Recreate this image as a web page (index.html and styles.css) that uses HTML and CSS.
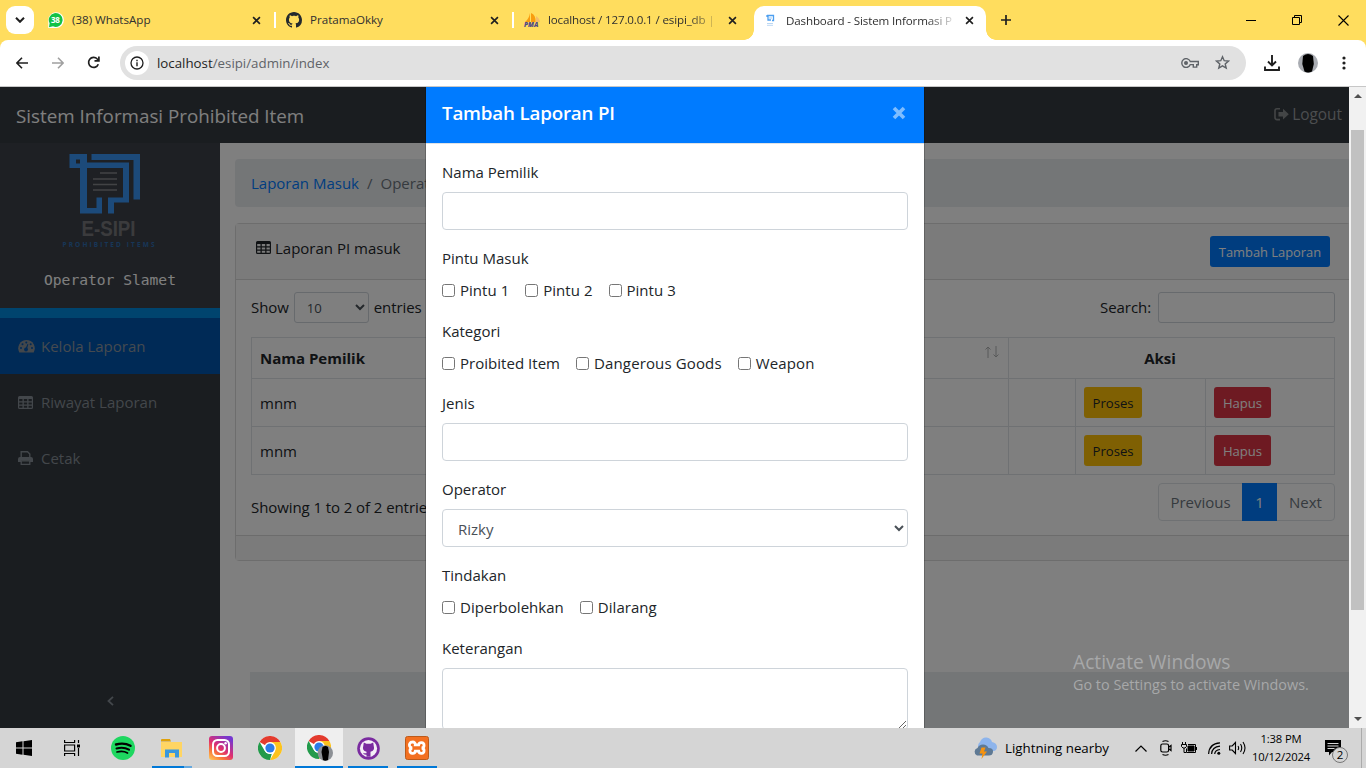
FILE: index.html
```html
<!DOCTYPE html>
<html lang="id">
<head>
<meta charset="utf-8">
<title>Dashboard - Sistem Informasi Prohibited Item</title>
<link rel="stylesheet" href="styles.css">
</head>
<body>
<svg class="defs" aria-hidden="true">
  <symbol id="i-close" viewBox="0 0 10 10"><path d="M1.2 1.2l7.6 7.6M8.8 1.2L1.2 8.8" stroke="#1f1f1f" stroke-width="1.8" fill="none"/></symbol>
  <symbol id="i-octocat" viewBox="0 0 16 16"><path d="M8 0C3.58 0 0 3.58 0 8c0 3.54 2.29 6.53 5.47 7.59.4.07.55-.17.55-.38 0-.19-.01-.82-.01-1.49-2.01.37-2.53-.49-2.69-.94-.09-.23-.48-.94-.82-1.13-.28-.15-.68-.52-.01-.53.63-.01 1.08.58 1.23.82.72 1.21 1.87.87 2.33.66.07-.52.28-.87.51-1.07-1.78-.2-3.64-.89-3.64-3.95 0-.87.31-1.59.82-2.15-.08-.2-.36-1.02.08-2.12 0 0 .67-.21 2.2.82.64-.18 1.32-.27 2-.27s1.36.09 2 .27c1.53-1.04 2.2-.82 2.2-.82.44 1.1.16 1.92.08 2.12.51.56.82 1.27.82 2.15 0 3.07-1.87 3.75-3.65 3.95.29.25.54.73.54 1.48 0 1.07-.01 1.93-.01 2.2 0 .21.15.46.55.38A8.01 8.01 0 0 0 16 8c0-4.42-3.58-8-8-8z"/></symbol>
  <symbol id="i-table" viewBox="0 0 15 13"><path fill-rule="evenodd" d="M1.5 0h12A1.500 1.500 0 0 1 15 1.500v10a1.500 1.500 0 0 1-1.500 1.500h-12A1.500 1.500 0 0 1 0 11.500v-10A1.500 1.500 0 0 1 1.500 0zM1.200 3v2.200h3.300V3zm4.600 0v2.200h3.400V3zm4.700 0v2.200h3.300V3zM1.200 6.400v2.200h3.300V6.400zm4.600 0v2.200h3.400V6.400zm4.700 0v2.200h3.300V6.400zM1.200 9.800v2h3.300v-2zm4.600 0v2h3.400v-2zm4.700 0v2h3.300v-2z"/></symbol>
  <symbol id="i-chrome" viewBox="0 0 24 24"><circle cx="12" cy="12" r="12" fill="#fff"/><path d="M12 12L1.600 6A12 12 0 0 1 22.400 6z" fill="#e33b2e"/><path d="M12 6h10.400A12 12 0 0 1 12 24l5.200-9z" fill="#fcc31e"/><path d="M1.600 6l5.200 9a6 6 0 0 0 7 2.700L12 24A12 12 0 0 1 1.600 6z" fill="#239a4b"/><circle cx="12" cy="12" r="5.900" fill="#fff"/><circle cx="12" cy="12" r="4.600" fill="#2c7be8"/></symbol>
</svg>

<div class="browser">
  <header class="tabstrip">
    <button class="tab-search"><svg width="10" height="6"><path d="M1 .8l4 4 4-4" fill="none" stroke="#1f1f1f" stroke-width="2"/></svg></button>
    <div class="tab tab-1">
      <svg width="16" height="16" viewBox="0 0 16 16"><path d="M.3 15.900V8a7.800 7.800 0 1 1 7.800 7.900z" fill="#fff"/><path d="M1 15.200l.6-4A6.900 6.900 0 1 1 5 14.300z" fill="#12c246"/></svg>
      <span class="badge38">38</span>
      <span class="tab-title">(38) WhatsApp</span><svg class="x" width="9" height="9"><use href="#i-close"/></svg>
    </div>
    <i class="sep"></i>
    <div class="tab tab-2">
      <svg width="16" height="16" fill="#24292e"><use href="#i-octocat"/></svg>
      <span class="tab-title">PratamaOkky</span><svg class="x" width="9" height="9"><use href="#i-close"/></svg>
    </div>
    <i class="sep"></i>
    <div class="tab tab-3">
      <span class="pma"><svg width="16" height="9" viewBox="0 0 16 9"><path d="M6 0v9H1q4-3 5-9zM7 0q5 2 4.500 9H7z" fill="#f89c0e"/><path d="M12 3q3.500 2 4 6H12z" fill="#f4bd6a"/></svg><b>PMA</b></span>
      <span class="tab-title fade">localhost / 127.0.0.1 / esipi_db |</span><svg class="x" width="9" height="9"><use href="#i-close"/></svg>
    </div>
    <div class="tab tab-active">
      <svg width="16" height="16" viewBox="0 0 16 16" fill="none"><path d="M5 2.500h6.500v5H10M6 3v4h3M5 2v2" stroke="#4d9ff0" stroke-width="1.300"/><path d="M7 5h3" stroke="#9cc8f3"/><path d="M5 10.500h6M5 12.300h6" stroke="#bcd8f3"/></svg>
      <span class="tab-title fade">Dashboard - Sistem Informasi P</span><svg class="x" width="9" height="9"><use href="#i-close"/></svg>
    </div>
    <svg class="newtab" width="12" height="12"><path d="M6 1v10M1 6h10" stroke="#1f1f1f" stroke-width="1.700"/></svg>
    <div class="winctl">
      <svg width="10" height="10"><path d="M0 5.500h10" stroke="#000"/></svg>
      <svg width="10" height="10" fill="none" stroke="#000"><path d="M.5 2.500h7v7h-7zM2.500 2.500v-2h7v7h-2"/></svg>
      <svg width="11" height="11"><path d="M.5 .5l10 10M10.500 .5l-10 10" stroke="#000" stroke-width="1.100"/></svg>
    </div>
  </header>

  <div class="toolbar">
    <svg class="nav-back" width="12" height="12" fill="none" stroke="#1f1f1f" stroke-width="1.600"><path d="M12 6H1M6 .8L.9 6 6 11.200"/></svg>
    <svg class="nav-fwd" width="12" height="12" fill="none" stroke="#a0a0a0" stroke-width="1.600"><path d="M0 6h11M6 .8L11.100 6 6 11.200"/></svg>
    <svg class="nav-reload" width="13" height="13" fill="none" stroke="#1f1f1f" stroke-width="1.700"><path d="M11.300 8.200A5 5 0 1 1 10.300 3L11.800 4.500M7.500 4.800h4.400V.5"/></svg>
    <div class="omnibox">
      <span class="info"><svg width="14" height="14" fill="none" stroke="#1f1f1f"><circle cx="7" cy="7" r="6" stroke-width="1.300"/><path d="M7 6.200v4M7 3.700v1.500" stroke-width="1.400"/></svg></span>
      <span class="url"><em>localhost</em>/esipi/admin/index</span>
      <svg class="key" width="18" height="10" fill="none" stroke="#5f6368" stroke-width="1.400"><path d="M9.300 3.500h8v3.300h-1.600v2.300h-3.400V6.600h-3A4.400 4.400 0 1 1 9.300 3.500z"/><circle cx="5" cy="5" r="1.300" fill="#5f6368"/></svg>
      <svg class="star" width="15" height="15" viewBox="0 0 15 15" fill="none" stroke="#5f6368" stroke-width="1.400"><path d="M7.500 1.800l1.700 3.900 4.200.4-3.200 2.800 1 4.200-3.700-2.300-3.700 2.300 1-4.200L1.600 6.100l4.200-.4z"/></svg>
    </div>
    <svg class="dl" width="16" height="16" fill="none" stroke="#1f1f1f" stroke-width="1.900"><path d="M8 0v10M4 6.500l4 4 4-4M1 11.500V15h14v-3.500"/></svg>
    <svg class="avatar" width="20" height="20"><circle cx="10" cy="10" r="10" fill="#a9acb2"/><path d="M5 3q5-4 10 0l.8 8-1.800 7.500q-4 2-7.500 0L4.300 11z" fill="#000"/></svg>
    <svg class="menu" width="4" height="14" fill="#1f1f1f"><circle cx="2" cy="2" r="1.600"/><circle cx="2" cy="7" r="1.600"/><circle cx="2" cy="12" r="1.600"/></svg>
  </div>

  <main class="viewport">
    <div class="page">
      <nav class="navbar">
        <span class="brand">Sistem Informasi Prohibited Item</span>
        <span class="logout"><svg width="15" height="13" fill="#878a8c"><path d="M6 1.600H3A1.200 1.200 0 0 0 1.800 2.800v6.800A1.200 1.200 0 0 0 3 10.800h3v1.600H3A2.800 2.800 0 0 1 .2 9.600V2.800A2.800 2.800 0 0 1 3 0h3zM9 .8l5.800 5.400L9 11.600V8.500H4.500V4H9z"/></svg>Logout</span>
      </nav>
      <div class="wrap">
        <aside class="sidebar">
          <div class="profile">
            <svg class="logo" width="94" height="94" viewBox="0 0 94 94">
              <g fill="#3894f4"><path fill-rule="evenodd" d="M7.500 0h17.500v8.500h42v40H52v11h-6V43.500h15V14H25v40h9.500v-10.500h5.500v16H18V14H7.500zM14 5.500v4h4v-4z"/><path d="M29.500 0H78v45.500h-6.500V6H29.500z"/></g>
              <path d="M38 19h17M31 25h24M31 30.500h24M31 36h24" stroke="#85868a" stroke-width="1.300"/>
              <text class="lg1" x="19.500" y="82" textLength="54" lengthAdjust="spacingAndGlyphs">E-SIPI</text>
              <text class="lg2" x="0.500" y="92.600" textLength="92">PROHIBITED ITEMS</text>
            </svg>
            <span class="operator">Operator Slamet</span>
          </div>
          <ul class="menu-list">
            <li class="active"><svg width="17" height="14" viewBox="0 0 17 14"><path d="M8.500 1A8.300 8.300 0 0 0 1.300 13.400h14.400A8.300 8.300 0 0 0 8.500 1z" fill="#868e96"/><g fill="#0053ac"><circle cx="3" cy="9" r="1"/><circle cx="4.500" cy="5.300" r="1"/><circle cx="8.300" cy="3.500" r="1"/><circle cx="14" cy="9" r="1"/><circle cx="12.700" cy="5.300" r="1"/><circle cx="8" cy="10.500" r="1.900"/><path d="M7.500 9.500l2-4.500.8.300-1.300 5z"/></g></svg>Kelola Laporan</li>
            <li><svg width="15" height="13" fill="#868e96"><use href="#i-table"/></svg>Riwayat Laporan</li>
            <li><svg width="15" height="14" fill="none" stroke="#868e96"><path d="M3.200 7V.8h6.300l2.300 2.300V7" stroke-width="1.400"/><path d="M0 11V8q0-2 2-2h11q2 0 2 2v3h-3V9.500H3V11z" fill="#868e96" stroke="none"/><path d="M3.200 9.800h8.600v3.500H3.200z" stroke-width="1.300"/></svg>Cetak</li>
          </ul>
          <svg class="collapse" width="7" height="10"><path d="M6 .8L1.500 5 6 9.200" fill="none" stroke="#868e96" stroke-width="1.800"/></svg>
        </aside>
        <section class="content">
          <div class="breadcrumb"><a>Laporan Masuk</a><span>/</span><span>Operator</span></div>
          <div class="card">
            <div class="card-header"><svg width="15" height="13" fill="#212529"><use href="#i-table"/></svg><span>Laporan PI masuk</span><button class="btn primary">Tambah Laporan</button></div>
            <div class="card-body">
              <div class="controls"><span>Show</span><select class="len"><option>10</option></select><span>entries</span><span class="search">Search:</span><input class="search-box"></div>
              <table>
                <colgroup><col class="c1"><col class="c2"><col class="c3"><col class="c4"></colgroup>
                <tr class="head"><th><div class="th">Nama Pemilik<span class="sort"><svg width="14" height="12" fill="none" stroke="#212529"><path d="M3 12V1M.5 3.500L3 1l2.500 2.500M11 0v11M8.500 8.500L11 11l2.500-2.500"/></svg></span></div></th><th colspan="3" class="aksi">Aksi</th></tr>
                <tr><td>mnm</td><td></td><td><button class="btn warning">Proses</button></td><td><button class="btn danger">Hapus</button></td></tr>
                <tr><td>mnm</td><td></td><td><button class="btn warning">Proses</button></td><td><button class="btn danger">Hapus</button></td></tr>
              </table>
              <div class="foot"><span>Showing 1 to 2 of 2 entries</span><div class="pager"><span class="prev">Previous</span><span class="cur">1</span><span class="next">Next</span></div></div>
            </div>
            <div class="card-footer"></div>
          </div>
          <div class="site-footer"></div>
        </section>
      </div>
      <div class="scrim"></div>
      <div class="modal">
        <div class="modal-header"><h5>Tambah Laporan PI</h5><svg width="14" height="14"><path d="M2 2l10 10M12 2L2 12" stroke="#7fbdff" stroke-width="3.600"/></svg></div>
        <form class="modal-body">
          <label>Nama Pemilik</label><input class="field">
          <label>Pintu Masuk</label>
          <div class="checks tall"><span class="k"><input type="checkbox">Pintu 1</span><span class="k"><input type="checkbox">Pintu 2</span><span class="k"><input type="checkbox">Pintu 3</span></div>
          <label>Kategori</label>
          <div class="checks"><span class="k"><input type="checkbox">Proibited Item</span><span class="k wide"><input type="checkbox">Dangerous Goods</span><span class="k wide"><input type="checkbox">Weapon</span></div>
          <label>Jenis</label><input class="field">
          <label>Operator</label><select class="field"><option>Rizky</option></select>
          <label>Tindakan</label>
          <div class="checks tall"><span class="k"><input type="checkbox">Diperbolehkan</span><span class="k"><input type="checkbox">Dilarang</span></div>
          <label>Keterangan</label><textarea class="field area"></textarea>
        </form>
      </div>
      <div class="watermark"><div class="w1">Activate Windows</div><div class="w2">Go to Settings to activate Windows.</div></div>
    </div>
    <div class="scrollbar">
      <svg width="8" height="4"><path d="M0 4l4-4 4 4z" fill="#505050"/></svg>
      <i class="thumb"></i>
      <svg class="down" width="8" height="4"><path d="M0 0l4 4 4-4z" fill="#505050"/></svg>
    </div>
  </main>

  <footer class="taskbar">
    <div class="tb start"><svg width="16" height="16"><path d="M0 2.300L6.500 1.300V7.600H0zM7.500 1.200L16 0v7.600H7.500zM0 8.500h6.500v6.300L0 13.800zM7.500 8.500H16V16l-8.500-1.200z"/></svg></div>
    <div class="tb view"><svg width="17" height="16" fill="none" stroke="#000" stroke-width="1.200"><path d="M.6 0v2.500h10V0M.6 16v-2.500h10V16M.6 5h10v6H.6zM14.500 0v3M14.500 8v8"/><path d="M13 4.500h3v3h-3z" fill="#000" stroke="none"/></svg></div>
    <div class="tb"><svg width="24" height="24" fill="none" stroke="#000" stroke-linecap="round"><circle cx="12" cy="12" r="12" fill="#1ed760" stroke="none"/><path d="M5 8.500q8-2.300 14.500 1.300" stroke-width="2.400"/><path d="M5.500 12.500q7-2 12.500 1.200" stroke-width="2"/><path d="M6 16q6-1.600 10.500 1" stroke-width="1.700"/></svg></div>
    <div class="tb run two"><svg width="22" height="19"><path d="M0 3h21v15H0z" fill="#ffd563"/><path d="M0 1q0-1 1-1h8l1 2.500H0z" fill="#dfa10a"/><path d="M4 18.500V10.500h14v8h-4V14H8v4.500z" fill="#3a97dd"/></svg></div>
    <div class="tb"><svg width="24" height="24"><defs><linearGradient id="ig" x1="0" y1="1" x2=".7" y2="0"><stop offset="0" stop-color="#ffd05a"/><stop offset=".3" stop-color="#f9793a"/><stop offset=".55" stop-color="#e0306f"/><stop offset="1" stop-color="#7638d0"/></linearGradient></defs><rect width="24" height="24" rx="3" fill="url(#ig)"/><g fill="none" stroke="#fff" stroke-width="2"><rect x="4" y="4" width="16" height="16" rx="4.500"/><circle cx="12" cy="12" r="3.900"/></g><circle cx="16.600" cy="7.300" r="1.200" fill="#fff"/></svg></div>
    <div class="tb"><svg width="24" height="24"><use href="#i-chrome"/></svg></div>
    <div class="tb run sel"><svg width="26" height="26"><use href="#i-chrome" width="24" height="24"/><circle cx="18.300" cy="18" r="7.700" fill="#8d9196"/><path d="M15.500 12q3-2 5.500 0l1 5-1 8q-3 1.400-5 0l-1.500-8z"/></svg></div>
    <div class="tb run"><svg width="23" height="23"><circle cx="11.500" cy="11.500" r="11.300" fill="#7a2ba0"/><circle cx="11.500" cy="11.500" r="8.600" fill="#f4eef7"/><path d="M6.800 5.500l2.600 1.200h4.200l2.600-1.200.5 3.200q1.500 5-3.200 6v5h-4v-2q-3 .3-3.500-2 1.700 1 3.500.5v-1.500q-4.700-1-3.200-6z" fill="#7a2ba0"/></svg></div>
    <div class="tb run"><svg width="24" height="24"><rect x=".5" y=".5" width="23" height="23" rx="2" fill="#f37021" stroke="#bd5a1a"/><path d="M7.500 6a2.500 2.500 0 0 1 2.800 2.800h3.400a2.700 2.700 0 1 1 3 3.200 2.700 2.700 0 1 1-3 3.200h-3.400A2.700 2.700 0 1 1 7.300 12a2.800 2.800 0 0 1 .2-6z" fill="none" stroke="#fff" stroke-width="2.800"/></svg></div>
    <div class="weather"><svg width="25" height="22" viewBox="0 0 25 22"><path d="M7 13a5 5 0 0 1 0-8Q9 0 13.500.5 18 1 19 5q5 1 5 5 0 3-3 4z" fill="#8db4ec"/><path d="M4 18.500a4 4 0 0 1 .5-7.500Q6 7.500 10 7.500t5.500 3.500q5 0 4.500 4-.5 3.500-4 3.500z" fill="#5e7994"/><path d="M8.500 10.500h4l-1.500 4h3L8.500 22l1-5.500H6.500z" fill="#f7930e"/></svg><span>Lightning nearby</span></div>
    <svg class="t-up" width="12" height="7"><path d="M.5 6.500L6 1l5.500 5.500" fill="none" stroke="#000" stroke-width="1.200"/></svg>
    <svg class="t-meet" width="12" height="16" fill="none" stroke="#000" stroke-width="1.200"><path d="M2.500 1.500q3-1.500 6 0M2.500 14.500q3 1.500 6 0M9 7l2-1.500v5L9 9"/><rect x=".8" y="4" width="7.800" height="8" rx="1.800"/></svg>
    <svg class="t-bat" width="16" height="12" fill="none" stroke="#000"><path d="M1.500 0v2.500M4.500 0v2.500M.5 2.500h5v2l-1.500 1.500H2L.5 4.500zM3 6v4.500h2M7 2.500h7.500v8H5.500v-4M15.500 5v3"/><path d="M7 4h6v5H7z" fill="#000"/></svg>
    <svg class="t-wifi" width="13" height="13" fill="none" stroke="#000" stroke-width="1.200"><path d="M.6 12Q1 1.500 12 .8M3.600 12Q4 5 12 4.200M6.700 12Q7 8 12 7.500"/><circle cx="10.800" cy="11.200" r="1.500" fill="#000" stroke="none"/></svg>
    <svg class="t-vol" width="17" height="14" fill="none" stroke="#000" stroke-width="1.100"><path d="M.6 5h2.600L6.500 1.500v11L3.200 9H.6zM9 5q1.300 2 0 4M11.500 3q2.500 4 0 8M14 1q4 6 0 12"/></svg>
    <div class="clock"><span>1:38 PM</span><span>10/12/2024</span></div>
    <div class="notif"><svg width="17" height="16"><path d="M0 0h16v12H7l-3 3.500V12H0z"/><path d="M2.500 3.500h11M2.500 6h11M2.500 8.500h7" stroke="#d5d5d5"/></svg><span>2</span></div>
    <i class="peek"></i>
  </footer>
</div>
</body>
</html>
```
FILE: styles.css
```css
* { box-sizing: border-box; }
body { margin: 0; width: 1366px; height: 768px; overflow: hidden; font: 15px/24px "Open Sans", "Noto Sans", sans-serif; color: #212529; }
svg { display: block; flex: none; }
.defs { position: absolute; width: 0; height: 0; }
button, input, select, textarea { font: inherit; }
.browser { display: flex; flex-direction: column; height: 768px; background: #ffdd5e; }

/* Tab strip */
.tabstrip { display: flex; align-items: center; height: 40px; padding-left: 6px; font-size: 11.6px; color: #303030; }
.tab-search { width: 28px; height: 28px; padding: 0; border: 0; border-radius: 9px; background: #fff; display: flex; align-items: center; justify-content: center; }
.tab { position: relative; display: flex; align-items: center; height: 34px; gap: 8px; flex: none; }
.tab-1 { margin-left: 14px; width: 213px; }
.tab-2 { margin-left: 10px; width: 213px; }
.tab-3 { margin-left: 10px; width: 213px; }
.badge38 { position: absolute; left: 3px; top: 9px; font: bold 8px/16px "Open Sans", sans-serif; color: #fff; letter-spacing: -.3px; }
.sep { width: 2px; height: 16px; background: #fff; margin-left: 13px; flex: none; }
.tab-title { white-space: nowrap; }
.fade { width: 168px; letter-spacing: -.15px; -webkit-mask-image: linear-gradient(90deg, #000 84%, rgba(0, 0, 0, .15)); mask-image: linear-gradient(90deg, #000 84%, rgba(0, 0, 0, .15)); }
.x { margin-left: auto; }
.pma { width: 16px; font: italic 900 6.5px/6px "Open Sans", sans-serif; color: #4f4a86; }
.pma b { display: block; }
.tab-active { width: 232px; align-self: flex-end; margin-left: 17px; padding: 0 12px 5px 8px; background: #fff; border-radius: 10px 10px 0 0; }
.tab-active .fade { width: 167px; }
.tab-active::before, .tab-active::after { content: ""; position: absolute; bottom: 0; width: 10px; height: 10px; }
.tab-active::before { left: -10px; background: radial-gradient(circle at 0 0, transparent 9.5px, #fff 10px); }
.tab-active::after { right: -10px; background: radial-gradient(circle at 100% 0, transparent 9.5px, #fff 10px); }
.newtab { margin-left: 14px; }
.winctl { display: flex; align-items: center; gap: 36px; margin: 0 17px 0 auto; }

/* Toolbar */
.toolbar { display: flex; align-items: center; height: 47px; padding: 0 20px 1px 16px; background: #fff; border-bottom: 1px solid #c7c7c7; border-radius: 8px 8px 0 0; }
.nav-fwd { margin-left: 24px; }
.nav-reload { margin-left: 23px; }
.omnibox { display: flex; align-items: center; width: 1126px; height: 34px; margin-left: 20px; padding: 0 16px 0 5px; border-radius: 17px; background: #e1e1e1; }
.info { width: 24px; height: 24px; border-radius: 50%; background: #fff; display: flex; align-items: center; justify-content: center; }
.url { margin-left: 8px; font-size: 13.3px; color: #5f6368; }
.url em { font-style: normal; color: #1f1f1f; }
.key { margin-left: auto; }
.star { margin-left: 16px; }
.dl { margin-left: 18px; }
.avatar { margin-left: 18px; }
.menu { margin-left: auto; }

/* Application page */
.viewport { display: flex; height: 641px; }
.page { position: relative; width: 1349px; overflow: hidden; background: #fff; display: flex; flex-direction: column; }
.navbar { display: flex; align-items: center; justify-content: space-between; height: 56px; flex: none; padding: 1px 7px 0 16px; background: #343a40; }
.brand { font-size: 18.8px; color: #fff; }
.logout { display: flex; align-items: center; gap: 3px; margin-top: -2px; font-size: 15.4px; color: #999c9f; }
.wrap { display: flex; height: 585px; flex: none; }
.sidebar { display: flex; flex-direction: column; width: 220px; flex: none; background: #343a40; }
.profile { display: flex; flex-direction: column; align-items: center; height: 165px; padding-top: 11px; background: #3c4149; }
.logo { margin-left: -3px; }
.lg1 { font: bold 21.500px "Liberation Sans", sans-serif; fill: #76777a; }
.lg2 { font: bold 6.500px "Open Sans", sans-serif; fill: #2f6caf; }
.operator { margin-top: 20px; font: 14.620px/24px "DejaVu Sans Mono", monospace; color: #fff; }
.menu-list { list-style: none; margin: 0; padding: 10px 0 0; background: #0088dc; }
.menu-list li { display: flex; align-items: center; height: 56px; padding: 0 0 0 18px; background: #343a40; color: #868e96; }
.menu-list li svg { margin-right: 8px; }
.menu-list li.active { background: #0054ac; color: #8b94a0; }
.menu-list li.active svg { margin-right: 6px; }
.collapse { margin: auto auto 22px 107px; }
.content { display: flex; flex-direction: column; width: 1131px; flex: none; padding: 16px 0 0 15px; }
.breadcrumb { display: flex; flex: none; gap: 8px; height: 48px; padding: 12px 16px; background: #e9ecef; border-radius: 4px; color: #6c757d; }
.breadcrumb a { color: #007bff; }
.card { flex: none; margin-top: 16px; border: 1px solid #dadada; border-radius: 4px; width: 1116px; }
.card-header { display: flex; align-items: center; height: 56px; padding: 0 20px; background: #f7f7f7; border-bottom: 1px solid #d8d8d8; }
.card-header span { margin: -8px auto 0 4px; }
.card-header > svg { margin-top: -9px; }
.btn { height: 31px; padding: 0; border: 1px solid transparent; border-radius: 3px; font-size: 13.100px; white-space: nowrap; color: #fff; }
.primary { width: 120px; background: #007bff; font-size: 12.900px; }
.warning { width: 58px; background: #ffc107; color: #212529; }
.danger { width: 57px; background: #dc3545; }
.card-body { height: 255px; padding: 12px 15px 0; }
.controls { display: flex; align-items: center; height: 31px; gap: 5px; }
.controls span { margin-top: -2px; letter-spacing: -.08px; }
.len { width: 75px; height: 31px; padding: 4px 8px; border: 1px solid #ced4da; border-radius: 3px; background: #fff; color: #495057; font-size: 13.150px; }
.controls .search { margin-left: auto; }
.search-box { width: 177px; height: 31px; margin-left: 2px; border: 1px solid #ced4da; border-radius: 3px; }
table { margin-top: 14px; width: 1083px; table-layout: fixed; border-collapse: collapse; }
td, th { border: 1px solid #dee2e6; padding: 0 8px; height: 48px; text-align: left; }
.head th { height: 41px; font-weight: 700; }
.th { display: flex; }
.sort { margin: 0 1px 0 auto; opacity: .35; }
.head .aksi { text-align: center; padding-right: 31px; }
.c1 { width: 757px; } .c2 { width: 67px; } .c3 { width: 130px; } .c4 { width: 129px; }
td .btn { display: block; }
.foot { display: flex; justify-content: space-between; padding-top: 8px; }
.foot > span { padding-top: 12px; letter-spacing: -.08px; }
.pager { display: flex; width: 177px; height: 38px; border: 1px solid #dee2e6; border-radius: 4px; color: #6c757d; line-height: 36px; text-align: center; }
.prev { width: 83px; }
.cur { width: 35px; background: #007bff; color: #fff; line-height: 38px; margin: -1px 0; }
.next { flex: 1; }
.card-footer { height: 25px; border-top: 1px solid #d8d8d8; background: #f7f7f7; }
.site-footer { height: 80px; margin: 111px 0 0 15px; background: #e9ecef; flex: none; }
.scrim { position: absolute; inset: 0; background: rgba(0, 0, 0, .5); }

/* Dialog */
.modal { position: absolute; left: 425px; top: -1px; width: 500px; height: 760px; border: 1px solid rgba(0, 0, 0, .2); background: #fff; background-clip: padding-box; }
.modal-header { display: flex; justify-content: space-between; height: 57px; padding: 11px 18px 0 16px; background: #007bff; border-bottom: 1px solid #dee2e6; }
.modal-header h5 { margin: 0; font-size: 18.750px; line-height: 30px; font-weight: 600; letter-spacing: -.18px; color: #fff; }
.modal-header svg { margin-top: 8px; }
.modal-body { display: flex; flex-direction: column; padding: 16px; }
.modal-body label { height: 24px; margin-bottom: 8px; }
.field { width: 466px; height: 38px; flex: none; margin: 0 0 16px; padding: 6px 12px; border: 1px solid #ced4da; border-radius: 4px; background: #fff; color: #495057; }
select.field { padding: 7px 12px 5px 11px; }
.area { height: 62px; resize: vertical; }
.checks { display: flex; height: 24px; margin-bottom: 16px; gap: 16px; }
.checks.tall { height: 25px; }
.k { display: flex; letter-spacing: .03px; }
.k.wide { letter-spacing: .13px; }
.k input { width: 13px; height: 13px; margin: 6px 5px 0 0; }

.watermark { position: absolute; left: 1073px; top: 562px; color: #a7a8a9; white-space: nowrap; }
.w1 { font-size: 19.200px; line-height: 26px; }
.w2 { font-size: 14.4px; line-height: 20px; }
.scrollbar { width: 17px; background: #f1f1f1; display: flex; flex-direction: column; align-items: center; padding: 7px 0; }
.thumb { width: 13px; height: 480px; margin-top: 32px; background: #c1c1c1; }
.down { margin-top: auto; }

/* Taskbar */
.taskbar { display: flex; height: 40px; background: #d5d5d5; color: #000; align-items: center; }
.tb { display: flex; align-items: center; justify-content: center; flex: none; width: 48px; height: 40px; margin-right: 1px; }
.tb.start { margin-right: 0; }
.tb.view { margin-right: 3px; }
.run { background: linear-gradient(#0078d7, #0078d7) no-repeat 50% 100% / 40px 2px; }
.two { background: linear-gradient(90deg, #0078d7 32px, #66a9df 32px) no-repeat 50% 100% / 40px 2px; }
.sel { padding-left: 2px; background: linear-gradient(#0078d7, #0078d7) no-repeat 50% 100% / 48px 2px, #efefef; }
.weather { display: flex; align-items: center; flex: none; gap: 7px; margin-left: 531px; font-size: 13.3px; white-space: nowrap; }
.t-up { margin-left: 26px; }
.t-meet { margin-left: 13px; }
.t-bat { margin-left: 9px; }
.t-wifi { margin-left: 11px; }
.t-vol { margin-left: 8px; }
.clock { display: flex; flex-direction: column; align-items: center; width: 60px; margin-left: 5px; font-size: 11.250px; line-height: 18px; letter-spacing: -.15px; white-space: nowrap; }
.notif { position: relative; margin-left: 14px; }
.notif span { position: absolute; left: 7px; top: 7px; width: 16px; height: 16px; border: 1px solid #777; border-radius: 50%; background: #d5d5d5; font-size: 11.500px; line-height: 14px; text-align: center; }
.peek { width: 1px; height: 40px; margin: 0 4px 0 auto; background: #ababab; }
```
